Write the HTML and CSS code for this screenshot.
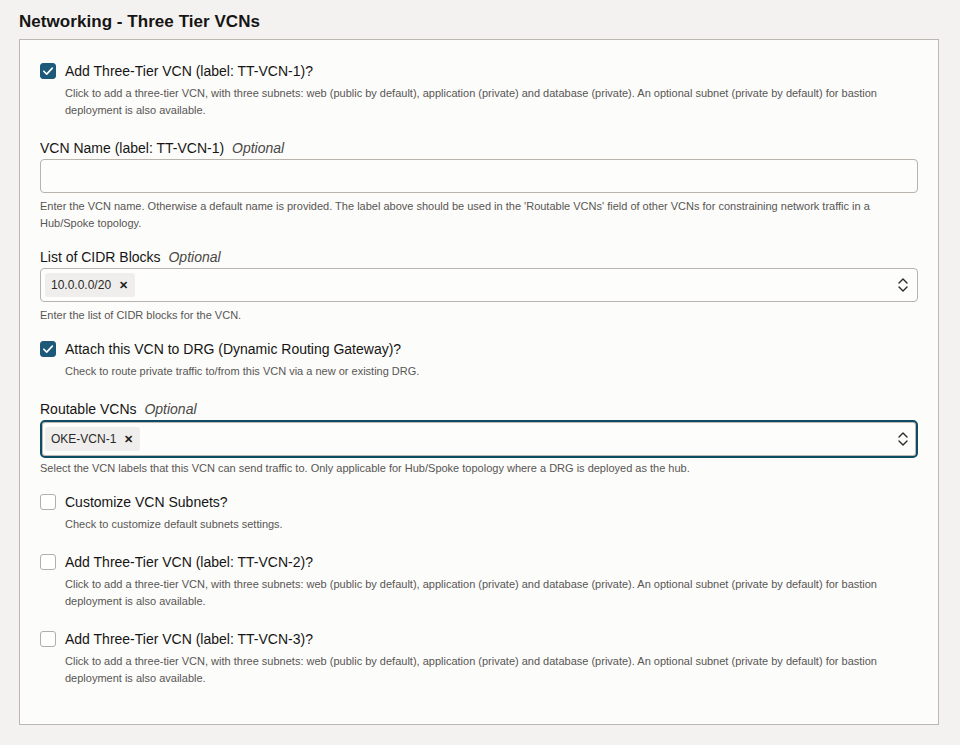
FILE: index.html
```html
<!DOCTYPE html>
<html>
<head>
<meta charset="utf-8">
<link rel="stylesheet" href="styles.css">
</head>
<body>
<h2 class="title">Networking - Three Tier VCNs</h2>
<div class="panel">
  <div class="check-item">
    <div class="check-row">
      <span class="box checked"><svg viewBox="0 0 16 16" width="16" height="16"><path d="M3.8 8.2l2.9 2.9 5.6-6" fill="none" stroke="#fff" stroke-width="1.6" stroke-linecap="round" stroke-linejoin="round"/></svg></span>
      <span class="check-label">Add Three-Tier VCN (label: TT-VCN-1)?</span>
    </div>
    <div class="help indent">Click to add a three-tier VCN, with three subnets: web (public by default), application (private) and database (private). An optional subnet (private by default) for bastion deployment is also available.</div>
  </div>

  <div class="field">
    <div class="field-label">VCN Name (label: TT-VCN-1) <em>Optional</em></div>
    <div class="input"></div>
    <div class="help">Enter the VCN name. Otherwise a default name is provided. The label above should be used in the 'Routable VCNs' field of other VCNs for constraining network traffic in a Hub/Spoke topology.</div>
  </div>

  <div class="field">
    <div class="field-label">List of CIDR Blocks <em>Optional</em></div>
    <div class="input select">
      <span class="chip">10.0.0.0/20 <span class="chip-x">✕</span></span>
      <svg class="chev" viewBox="0 0 12 16" width="12" height="16"><path d="M2 6l4-4 4 4M2 10l4 4 4-4" fill="none" stroke="#2b2a28" stroke-width="1.4" stroke-linecap="round" stroke-linejoin="round"/></svg>
    </div>
    <div class="help">Enter the list of CIDR blocks for the VCN.</div>
  </div>

  <div class="check-item">
    <div class="check-row">
      <span class="box checked"><svg viewBox="0 0 16 16" width="16" height="16"><path d="M3.8 8.2l2.9 2.9 5.6-6" fill="none" stroke="#fff" stroke-width="1.6" stroke-linecap="round" stroke-linejoin="round"/></svg></span>
      <span class="check-label">Attach this VCN to DRG (Dynamic Routing Gateway)?</span>
    </div>
    <div class="help indent">Check to route private traffic to/from this VCN via a new or existing DRG.</div>
  </div>

  <div class="field">
    <div class="field-label">Routable VCNs <em>Optional</em></div>
    <div class="input select focused">
      <span class="chip">OKE-VCN-1 <span class="chip-x">✕</span></span>
      <svg class="chev" viewBox="0 0 12 16" width="12" height="16"><path d="M2 6l4-4 4 4M2 10l4 4 4-4" fill="none" stroke="#2b2a28" stroke-width="1.4" stroke-linecap="round" stroke-linejoin="round"/></svg>
    </div>
    <div class="help tight">Select the VCN labels that this VCN can send traffic to. Only applicable for Hub/Spoke topology where a DRG is deployed as the hub.</div>
  </div>

  <div class="check-item">
    <div class="check-row">
      <span class="box"></span>
      <span class="check-label">Customize VCN Subnets?</span>
    </div>
    <div class="help indent">Check to customize default subnets settings.</div>
  </div>

  <div class="check-item">
    <div class="check-row">
      <span class="box"></span>
      <span class="check-label">Add Three-Tier VCN (label: TT-VCN-2)?</span>
    </div>
    <div class="help indent">Click to add a three-tier VCN, with three subnets: web (public by default), application (private) and database (private). An optional subnet (private by default) for bastion deployment is also available.</div>
  </div>

  <div class="check-item">
    <div class="check-row">
      <span class="box"></span>
      <span class="check-label">Add Three-Tier VCN (label: TT-VCN-3)?</span>
    </div>
    <div class="help indent">Click to add a three-tier VCN, with three subnets: web (public by default), application (private) and database (private). An optional subnet (private by default) for bastion deployment is also available.</div>
  </div>
</div>
</body>
</html>
```
FILE: styles.css
```css
* { box-sizing: border-box; }
html, body { margin: 0; padding: 0; }
body {
  background: #f3f2f1;
  font-family: "Liberation Sans", Arial, sans-serif;
  color: #161513;
  padding: 0 21px 0 19px;
}
.title {
  margin: 0;
  padding-top: 11px;
  height: 39px;
  font-size: 17px;
  line-height: 22px;
  font-weight: bold;
  color: #161513;
  letter-spacing: 0.05px;
}
.panel {
  background: #fcfcfb;
  border: 1px solid #bcb7b0;
  padding: 21px 20px 18px 20px;
  height: 686px;
}
.check-item { margin-bottom: 19px; }
.check-row {
  display: flex;
  align-items: center;
  height: 20px;
}
.box {
  width: 16px;
  height: 16px;
  border: 1px solid #b3aea7;
  border-radius: 3px;
  background: #fff;
  margin-right: 9px;
  flex: none;
  display: flex;
}
.box.checked {
  background: #1d5a79;
  border-color: #1d5a79;
}
.box.checked svg { margin: -1px; }
.check-label {
  font-size: 14px;
  line-height: 20px;
}
.help {
  font-size: 11px;
  line-height: 17px;
  color: #585653;
  margin-top: 5px;
}
.help.indent { padding-left: 25px; margin-top: 4px; }
.help.tight { margin-top: 2px; }
.field { margin-bottom: 15px; }
.field-label {
  font-size: 14px;
  line-height: 20px;
  margin-bottom: 1px;
}
.field-label em {
  font-style: italic;
  color: #4a4845;
  margin-left: 4px;
}
.input {
  height: 34px;
  border: 1px solid #b8b3ac;
  border-radius: 4px;
  background: #fdfdfc;
}
.select {
  display: flex;
  align-items: center;
  padding: 0 8px 0 4px;
}
.select.focused {
  height: 38px;
  border: 2px solid #0f4b62;
  box-shadow: inset 0 0 0 1px #bdb8b1;
  border-radius: 5px;
  padding: 0 7px 0 3px;
}
.chip {
  display: inline-flex;
  align-items: center;
  height: 24px;
  background: #efeeec;
  border-radius: 3px;
  padding: 0 7px 0 6px;
  font-size: 12px;
  color: #2a2927;
}
.chip-x {
  font-size: 11px;
  font-weight: bold;
  margin-left: 8px;
  color: #1f1e1c;
}
.chev { margin-left: auto; }
```
